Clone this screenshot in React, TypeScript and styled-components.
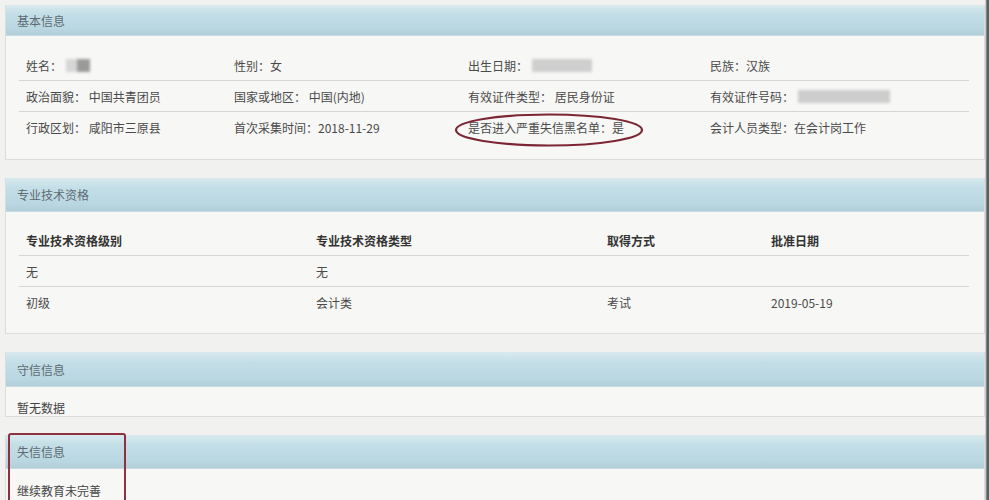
import React from "react";
import styled, { createGlobalStyle } from "styled-components";

const Global = createGlobalStyle`
  html, body { margin: 0; padding: 0; }
  body {
    background: #eff0ee;
    font-family: "Noto Sans CJK SC", "Noto Sans", sans-serif;
    color: #4a4a4a;
    font-size: 12px;
  }
`;

const Page = styled.div`
  position: relative;
  width: 989px;
  height: 500px;
  overflow: hidden;
  box-sizing: border-box;
  padding: 5px 4px 0 5px;
  display: flex;
  flex-direction: column;
  gap: 18px;
  background: linear-gradient(to right, #f1f2f0 0, #f1f2f0 985px, #5c5f60 987px);
`;

const Panel = styled.section`
  background: #f7f7f5;
  border: 1px solid #dcdddb;
  border-top: none;
`;

const Header = styled.div<{ $h: number }>`
  height: ${(p) => p.$h}px;
  box-sizing: border-box;
  padding-left: 11px;
  display: flex;
  align-items: center;
  background: linear-gradient(to bottom, #d9eaef 0%, #c3dee7 30%, #b9d7e1 80%, #b2ced8 100%);
  border-bottom: 1px solid #c9dbe1;
  color: #5d6a70;
  font-size: 12px;
`;

const Body = styled.div<{ $pt: number; $pb: number; $pl?: number }>`
  padding: ${(p) => p.$pt}px 15px ${(p) => p.$pb}px ${(p) => p.$pl ?? 13}px;
`;

const Grid = styled.div<{ $cols: string; $h: number; $line?: boolean; $bold?: boolean }>`
  display: grid;
  grid-template-columns: ${(p) => p.$cols};
  height: ${(p) => p.$h}px;
  align-items: center;
  border-bottom: ${(p) => (p.$line ? "1px solid #d6d7d5" : "1px solid transparent")};
  box-sizing: border-box;
  font-weight: ${(p) => (p.$bold ? 700 : 400)};
  color: ${(p) => (p.$bold ? "#333" : "#4a4a4a")};
`;

const Cell = styled.div`
  padding-left: 7px;
  white-space: nowrap;
  display: flex;
  align-items: center;
`;

const Blur = styled.span<{ $w: number; $c: string }>`
  display: inline-block;
  width: ${(p) => p.$w}px;
  height: 13px;
  margin-left: 4px;
  background: ${(p) => p.$c};
  filter: blur(1.5px);
`;

const Plain = styled.div`
  line-height: 16px;
  color: #444;
`;

const Highlight = styled.div`
  position: absolute;
  left: 8px;
  top: 433px;
  width: 118px;
  height: 80px;
  border: 2px solid #8e3040;
  border-radius: 3px;
  box-sizing: border-box;
  pointer-events: none;
`;

const Ring = styled.svg`
  position: absolute;
  left: 453px;
  top: 112px;
  pointer-events: none;
`;

const infoCols = "208px 234px 242px 1fr";
const qualCols = "290px 291px 164px 1fr";

export default function App() {
  return (
    <>
      <Global />
      <Page>
        <Panel>
          <Header $h={31}>基本信息</Header>
          <Body $pt={14} $pb={16}>
            <Grid $cols={infoCols} $h={31} $line>
              <Cell>
                姓名：
                <Blur $w={24} $c="linear-gradient(to right,#d6d6d6 0 45%,#9a9a9a 45% 100%)" />
              </Cell>
              <Cell>性别：女</Cell>
              <Cell>
                出生日期：
                <Blur $w={60} $c="#cfcfcf" />
              </Cell>
              <Cell>民族：汉族</Cell>
            </Grid>
            <Grid $cols={infoCols} $h={31} $line>
              <Cell>政治面貌： 中国共青团员</Cell>
              <Cell>国家或地区： 中国(内地)</Cell>
              <Cell>有效证件类型： 居民身份证</Cell>
              <Cell>
                有效证件号码：
                <Blur $w={92} $c="#cdcdcd" />
              </Cell>
            </Grid>
            <Grid $cols={infoCols} $h={31}>
              <Cell>行政区划： 咸阳市三原县</Cell>
              <Cell>首次采集时间：2018-11-29</Cell>
              <Cell>是否进入严重失信黑名单：是</Cell>
              <Cell>会计人员类型：在会计岗工作</Cell>
            </Grid>
          </Body>
        </Panel>

        <Panel>
          <Header $h={34}>专业技术资格</Header>
          <Body $pt={14} $pb={15}>
            <Grid $cols={qualCols} $h={30} $line $bold>
              <Cell>专业技术资格级别</Cell>
              <Cell>专业技术资格类型</Cell>
              <Cell>取得方式</Cell>
              <Cell>批准日期</Cell>
            </Grid>
            <Grid $cols={qualCols} $h={31} $line>
              <Cell>无</Cell>
              <Cell>无</Cell>
              <Cell></Cell>
              <Cell></Cell>
            </Grid>
            <Grid $cols={qualCols} $h={31}>
              <Cell>初级</Cell>
              <Cell>会计类</Cell>
              <Cell>考试</Cell>
              <Cell>2019-05-19</Cell>
            </Grid>
          </Body>
        </Panel>

        <Panel>
          <Header $h={35}>守信信息</Header>
          <Body $pt={13} $pb={0} $pl={11}>
            <Plain>暂无数据</Plain>
          </Body>
        </Panel>

        <Panel>
          <Header $h={34}>失信信息</Header>
          <Body $pt={14} $pb={10} $pl={11}>
            <Plain>继续教育未完善</Plain>
          </Body>
        </Panel>

        <Highlight />
        <Ring width="192" height="36" viewBox="0 0 192 36">
          <ellipse cx="96" cy="18" rx="93" ry="15.5" fill="none" stroke="#7c2633" strokeWidth="2.2" />
        </Ring>
      </Page>
    </>
  );
}
